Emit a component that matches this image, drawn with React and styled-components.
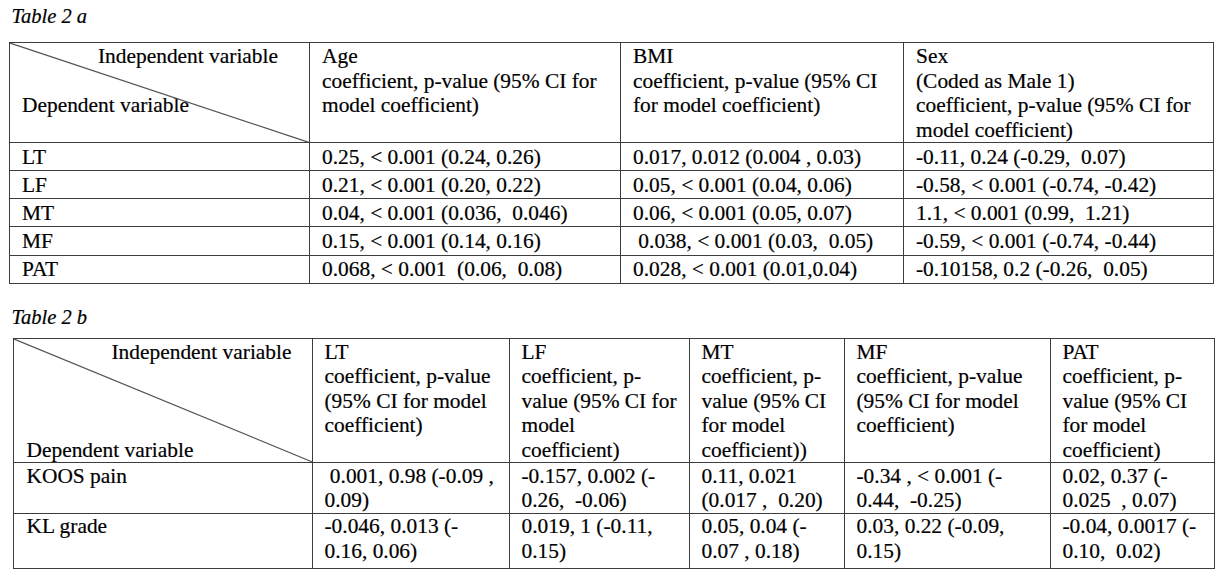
import React from "react";
import styled, { createGlobalStyle } from "styled-components";

const serif = `"Liberation Serif", "Times New Roman", serif`;

const GlobalStyle = createGlobalStyle`
  body {
    margin: 0;
    background: #fff;
    color: #000;
    font-family: ${serif};
  }
`;

const Page = styled.div`
  padding-top: 4px;
  font-family: ${serif};
  -webkit-text-stroke: 0.2px #000;
`;

const Caption = styled.div`
  font-family: ${serif};
  font-style: italic;
  font-size: 20.5px;
  line-height: 24px;
  margin-left: 11.5px;
  margin-top: ${(p) => p.$top || 0}px;
`;

const Table = styled.table`
  font-family: ${serif};
  border-collapse: collapse;
  table-layout: fixed;
  width: ${(p) => p.$width}px;
  margin-left: ${(p) => p.$left}px;
  margin-top: ${(p) => p.$top}px;
  font-size: 21.4px;
  line-height: 24.5px;
  color: #000;
`;

const Row = styled.tr`
  height: ${(p) => p.$h}px;
`;

const Cell = styled.td`
  font-family: ${serif};
  border: 1px solid #3d3d3d;
  padding: ${(p) => p.$top}px 4px 0 ${(p) => p.$pad || 12}px;
  vertical-align: top;
  white-space: pre;
  overflow: hidden;
`;

const Corner = styled(Cell)`
  position: relative;
`;

const Diagonal = styled.svg`
  position: absolute;
  inset: 0;
  width: 100%;
  height: 100%;
  pointer-events: none;
`;

const Indep = styled.div`
  padding-left: ${(p) => p.$indent}px;
`;

const Dep = styled.div`
  margin-top: ${(p) => p.$skip * 24.5}px;
`;

const tableA = {
  widths: [300, 311, 283, 310],
  heads: [
    "Age\ncoefficient, p-value (95% CI for\nmodel coefficient)",
    "BMI\ncoefficient, p-value (95% CI\nfor model coefficient)",
    "Sex\n(Coded as Male 1)\ncoefficient, p-value (95% CI for\nmodel coefficient)",
  ],
  rows: [
    ["LT", "0.25, < 0.001 (0.24, 0.26)", "0.017, 0.012 (0.004 , 0.03)", "-0.11, 0.24 (-0.29,  0.07)"],
    ["LF", "0.21, < 0.001 (0.20, 0.22)", "0.05, < 0.001 (0.04, 0.06)", "-0.58, < 0.001 (-0.74, -0.42)"],
    ["MT", "0.04, < 0.001 (0.036,  0.046)", "0.06, < 0.001 (0.05, 0.07)", "1.1, < 0.001 (0.99,  1.21)"],
    ["MF", "0.15, < 0.001 (0.14, 0.16)", " 0.038, < 0.001 (0.03,  0.05)", "-0.59, < 0.001 (-0.74, -0.44)"],
    ["PAT", "0.068, < 0.001  (0.06,  0.08)", "0.028, < 0.001 (0.01,0.04)", "-0.10158, 0.2 (-0.26,  0.05)"],
  ],
};

const tableB = {
  widths: [299, 197, 180, 155, 206, 164],
  heads: [
    "LT\ncoefficient, p-value\n(95% CI for model\ncoefficient)",
    "LF\ncoefficient, p-\nvalue (95% CI for\nmodel\ncoefficient)",
    "MT\ncoefficient, p-\nvalue (95% CI\nfor model\ncoefficient))",
    "MF\ncoefficient, p-value\n(95% CI for model\ncoefficient)",
    "PAT\ncoefficient, p-\nvalue (95% CI\nfor model\ncoefficient)",
  ],
  rows: [
    [
      "KOOS pain",
      " 0.001, 0.98 (-0.09 ,\n0.09)",
      "-0.157, 0.002 (-\n0.26,  -0.06)",
      "0.11, 0.021\n(0.017 ,  0.20)",
      "-0.34 , < 0.001 (-\n0.44,  -0.25)",
      "0.02, 0.37 (-\n0.025  , 0.07)",
    ],
    [
      "KL grade",
      "-0.046, 0.013 (-\n0.16, 0.06)",
      "0.019, 1 (-0.11,\n0.15)",
      "0.05, 0.04 (-\n0.07 , 0.18)",
      "0.03, 0.22 (-0.09,\n0.15)",
      "-0.04, 0.0017 (-\n0.10,  0.02)",
    ],
  ],
};

function DataTable({ data, left, top, padTop, headH, rowHs, indent, skip, firstPad }) {
  const width = data.widths.reduce((a, b) => a + b, 0);
  return (
    <Table $width={width} $left={left} $top={top}>
      <colgroup>
        {data.widths.map((w, i) => (
          <col key={i} style={{ width: w }} />
        ))}
      </colgroup>
      <tbody>
        <Row $h={headH}>
          <Corner $pad={firstPad} $top={padTop}>
            <Diagonal viewBox="0 0 100 100" preserveAspectRatio="none">
              <line
                x1="0"
                y1="0"
                x2="100"
                y2="100"
                stroke="#555"
                strokeWidth="1.2"
                vectorEffect="non-scaling-stroke"
              />
            </Diagonal>
            <Indep $indent={indent}>Independent variable</Indep>
            <Dep $skip={skip}>Dependent variable</Dep>
          </Corner>
          {data.heads.map((h, i) => (
            <Cell key={i} $top={padTop}>
              {h}
            </Cell>
          ))}
        </Row>
        {data.rows.map((r, ri) => (
          <Row key={ri} $h={rowHs[ri]}>
            {r.map((c, ci) => (
              <Cell key={ci} $top={padTop} $pad={ci === 0 ? firstPad : 12}>
                {c}
              </Cell>
            ))}
          </Row>
        ))}
      </tbody>
    </Table>
  );
}

export default function App() {
  return (
    <Page>
      <GlobalStyle />
      <Caption>Table 2 a</Caption>
      <DataTable
        data={tableA}
        left={9}
        top={13.6}
        padTop={1.5}
        headH={100}
        rowHs={[28.4, 28, 28, 28.3, 28.3]}
        indent={76}
        skip={1}
        firstPad={12}
      />
      <Caption $top={20.7}>Table 2 b</Caption>
      <DataTable
        data={tableB}
        left={12.5}
        top={9.7}
        padTop={0.3}
        headH={123.5}
        rowHs={[50.5, 55]}
        indent={85}
        skip={3}
        firstPad={13}
      />
    </Page>
  );
}
